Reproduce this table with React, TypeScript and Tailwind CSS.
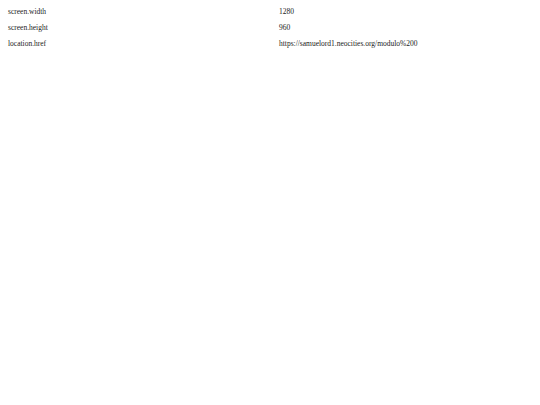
export default function App() {
  const rows = [
    ["screen.width", "1280"],
    ["screen.height", "960"],
    ["location.href", "https://samuelord1.neocities.org/modulo%200"],
  ];
  return (
    <div className="w-[540px] h-[405px] bg-white text-[#222222]" style={{ fontFamily: '"Liberation Serif", serif' }}>
      <div className="flex flex-col pt-[8px] pl-[8px]">
        {rows.map(([k, v]) => (
          <div key={k} className="flex h-[16px] items-start text-[7.5px] leading-[8px] font-normal">
            <div className="w-[271px]">{k}</div>
            <div>{v}</div>
          </div>
        ))}
      </div>
    </div>
  );
}
